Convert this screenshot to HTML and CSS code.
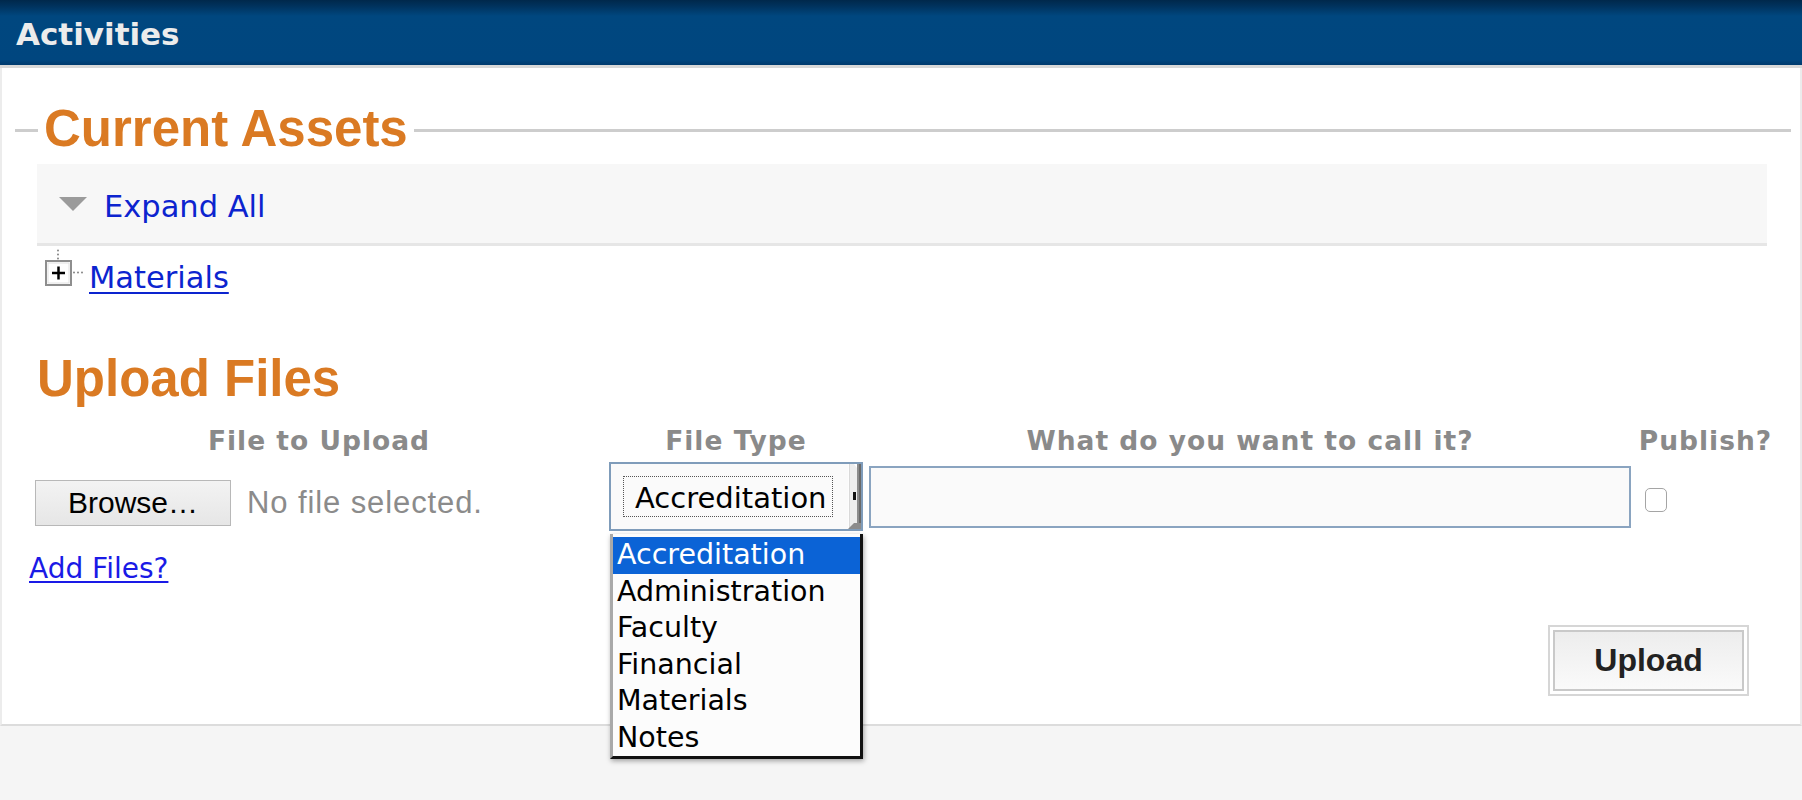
FILE: index.html
```html
<!DOCTYPE html>
<html lang="en">
<head>
<meta charset="utf-8">
<title>Activities</title>
<link rel="stylesheet" href="styles.css">
</head>
<body>
<header class="topbar">
  <h1 class="topbar-title">Activities</h1>
</header>
<main class="panel">
  <section class="assets">
    <div class="legend-row">
      <span class="legend-line legend-line--short"></span>
      <h2 class="section-title section-title--legend">Current Assets</h2>
      <span class="legend-line legend-line--fill"></span>
    </div>
    <div class="expand-bar">
      <svg class="expand-icon" width="28" height="14" viewBox="0 0 28 14"><polygon points="0,0 28,0 14,14" fill="#9b9b9b"/></svg>
      <a class="expand-link" href="#">Expand All</a>
    </div>
    <div class="tree-row">
      <svg class="tree-icon" width="38" height="37" viewBox="0 0 38 37">
        <circle cx="13" cy="1.5" r="0.9" fill="#777"/>
        <circle cx="13" cy="5.5" r="0.9" fill="#777"/>
        <circle cx="13" cy="9.5" r="0.9" fill="#777"/>
        <rect x="1" y="12" width="25" height="24" fill="#fff" stroke="#8e8e8e" stroke-width="2"/>
        <rect x="3" y="14" width="21" height="20" fill="none" stroke="#e2e2e2" stroke-width="1"/>
        <line x1="7" y1="24" x2="20" y2="24" stroke="#000" stroke-width="2.5"/>
        <line x1="13.5" y1="17.5" x2="13.5" y2="30.5" stroke="#000" stroke-width="2.5"/>
        <circle cx="29" cy="23.5" r="0.9" fill="#777"/>
        <circle cx="33" cy="23.5" r="0.9" fill="#777"/>
        <circle cx="37" cy="23.5" r="0.9" fill="#777"/>
      </svg>
      <a class="tree-link" href="#">Materials</a>
    </div>
  </section>

  <section class="upload">
    <h2 class="section-title section-title--plain">Upload Files</h2>
    <div class="upload-grid">
      <div class="col-head">File to Upload</div>
      <div class="col-head">File Type</div>
      <div class="col-head">What do you want to call it?</div>
      <div class="col-head">Publish?</div>

      <div class="file-field">
        <button class="browse-btn" type="button">Browse…</button>
        <span class="file-status">No file selected.</span>
      </div>

      <div class="type-field">
        <div class="select">
          <div class="select-value">Accreditation</div>
          <svg class="select-btn" width="13" height="65" viewBox="0 0 13 65" preserveAspectRatio="none">
            <rect x="0" y="0" width="13" height="65" fill="#ededed"/>
            <rect x="0" y="0" width="1" height="65" fill="#fdfdfd"/>
            <rect x="1" y="0" width="1" height="65" fill="#d9d9d9"/>
            <polygon points="6,0 9,0 9,4" fill="#ffffff"/>
            <rect x="9" y="0" width="4" height="65" fill="#8c8c8c"/>
            <rect x="11" y="0" width="2" height="65" fill="#6a6a6a"/>
            <polygon points="0,65 13,65 13,59 6,59" fill="#8c8c8c"/>
            <rect x="5" y="28" width="3" height="8" fill="#111"/>
          </svg>
        </div>
        <ul class="select-list">
          <li class="select-option select-option--active">Accreditation</li>
          <li class="select-option">Administration</li>
          <li class="select-option">Faculty</li>
          <li class="select-option">Financial</li>
          <li class="select-option">Materials</li>
          <li class="select-option">Notes</li>
        </ul>
      </div>

      <input class="name-input" type="text" aria-label="What do you want to call it?">

      <input class="publish-check" type="checkbox" aria-label="Publish?">
    </div>

    <p class="add-row"><a class="add-files" href="#">Add Files?</a></p>

    <div class="actions">
      <button class="upload-btn" type="button">Upload</button>
    </div>
  </section>
</main>
</body>
</html>
```

FILE: styles.css
```css
html, body {
  margin: 0;
  padding: 0;
}

html {
  min-height: 100%;
}

body {
  min-height: 800px;
  background: #f5f5f5;
  font-family: "DejaVu Sans", Verdana, sans-serif;
  color: #000;
}

/* ---------- Top bar ---------- */
.topbar {
  height: 65px;
  padding: 0 16px;
  background: linear-gradient(#00284b 0px, #003460 7px, #00477f 16px, #00467f 60px, #003c70 64px, #003c70 65px);
  border-bottom: 3px solid #d8d8d8;
}

.topbar-title {
  margin: 0;
  padding-top: 16px;
  font-family: "DejaVu Sans", Verdana, sans-serif;
  font-weight: bold;
  font-size: 31px;
  line-height: 36px;
  color: #ececec;
}

/* ---------- Panel ---------- */
.panel {
  display: block;
  position: relative;
  background: #fff;
  border-left: 2px solid #ececec;
  border-right: 2px solid #ececec;
  border-bottom: 2px solid #dcdcdc;
  padding: 32px 9px 33px 13px;
}

.legend-row {
  display: flex;
  align-items: flex-start;
  height: 58px;
}

.legend-line {
  height: 3px;
  margin-top: 29px;
  background: #cdcdcd;
}

.legend-line--short {
  width: 23px;
  flex: none;
}

.legend-line--fill {
  flex: 1;
}

.section-title {
  margin: 0;
  font-family: "Liberation Sans", Arial, sans-serif;
  font-weight: bold;
  font-size: 51px;
  line-height: 58px;
  color: #da7a23;
}

.section-title--legend {
  padding: 0 6px;
  flex: none;
}

.section-title--plain {
  margin-left: 22px;
}

/* ---------- Expand bar ---------- */
.expand-bar {
  display: flex;
  align-items: center;
  height: 79px;
  margin: 6px 24px 0 22px;
  padding-left: 22px;
  background: #f7f7f7;
  border-bottom: 3px solid #e6e6e6;
}

.expand-icon {
  flex: none;
  display: block;
}

.expand-link {
  margin-left: 17px;
  padding-top: 6px;
  font-size: 30.5px;
  line-height: 36px;
  color: #0c24cf;
  text-decoration: none;
}

/* ---------- Tree ---------- */
.tree-row {
  display: flex;
  align-items: flex-start;
  height: 45px;
  margin: 3px 0 0 30px;
}

.tree-icon {
  flex: none;
  display: block;
}

.tree-link {
  margin: 11px 0 0 6px;
  font-size: 30.5px;
  line-height: 35.5px;
  color: #0c24cf;
  text-decoration: underline;
  text-decoration-thickness: 2px;
  text-underline-offset: 4px;
}

/* ---------- Upload ---------- */
.upload {
  margin-top: 56px;
}

.upload-grid {
  display: grid;
  grid-template-columns: 568px 254px 762px 137px;
  column-gap: 6px;
  row-gap: 3px;
  align-items: start;
  margin: 17px 0 0 20px;
}

.col-head {
  text-align: center;
  font-family: "DejaVu Sans", Verdana, sans-serif;
  font-weight: bold;
  font-size: 26.5px;
  line-height: 32px;
  letter-spacing: 1px;
  color: #8a8a8a;
  white-space: nowrap;
}

.file-field {
  display: flex;
  align-items: center;
  margin-top: 20px;
}

.browse-btn {
  flex: none;
  width: 196px;
  height: 46px;
  padding: 0;
  border: 1.5px solid #b8b8b8;
  border-radius: 0;
  background: linear-gradient(#f3f3f3, #e6e6e6);
  font-family: "Liberation Sans", Arial, sans-serif;
  font-size: 30px;
  color: #000;
}

.file-status {
  margin-left: 16px;
  font-family: "Liberation Sans", Arial, sans-serif;
  font-size: 31px;
  letter-spacing: 0.9px;
  color: #8b8b8b;
  white-space: nowrap;
}

.type-field {
  position: relative;
  z-index: 10;
  margin-top: 2px;
}

.select {
  display: flex;
  align-items: flex-start;
  height: 69px;
  box-sizing: border-box;
  border: 2px solid #7f9cba;
  background: #fafafa;
}

.select-value {
  width: 210px;
  height: 41px;
  box-sizing: border-box;
  margin: 12px 0 0 12px;
  padding: 3px 0 0 11px;
  border: 1px dotted #555;
  font-size: 29px;
  line-height: 36px;
  color: #000;
  white-space: nowrap;
  overflow: hidden;
}

.select-btn {
  display: block;
  margin-left: auto;
  align-self: stretch;
  width: 13px;
  height: auto;
}

.select-list {
  position: absolute;
  left: 1px;
  top: calc(100% + 3px);
  z-index: 20;
  width: 253px;
  box-sizing: border-box;
  margin: 0;
  padding: 3px 0 0;
  list-style: none;
  background: #fcfcfc;
  border-left: 3px solid #a9a9a9;
  border-right: 3px solid #111;
  border-bottom: 3px solid #111;
  box-shadow: 1px 2px 5px rgba(0, 0, 0, 0.35);
}

.select-option {
  padding-left: 4px;
  font-size: 28.5px;
  line-height: 36.5px;
  color: #000;
  white-space: nowrap;
}

.select-option--active {
  background: #0b63d6;
  color: #fff;
}

.name-input {
  display: block;
  width: 100%;
  height: 62px;
  box-sizing: border-box;
  margin: 6px 0 0;
  border: 2px solid #8aa4c0;
  border-radius: 0;
  background: #fafafa;
}

.publish-check {
  appearance: none;
  -webkit-appearance: none;
  justify-self: start;
  width: 22px;
  height: 24px;
  box-sizing: border-box;
  margin: 28px 0 0 8px;
  border: 1.5px solid #a5a5a5;
  border-radius: 5px;
  background: #fff;
}

.add-row {
  margin: 21px 0 0 14px;
  font-size: 28px;
  line-height: 33px;
}

.add-files {
  color: #1a1ae6;
  text-decoration: underline;
  text-decoration-thickness: 2px;
  text-underline-offset: 3px;
}

.actions {
  display: flex;
  justify-content: flex-end;
  margin: 45px 47px 0 0;
}

.upload-btn {
  width: 191px;
  height: 61px;
  padding: 0;
  border: 2px solid #c9c9c9;
  border-radius: 0;
  background: linear-gradient(#ededed, #fafafa);
  box-shadow: 0 0 0 3px #fff, 0 0 0 5px #d6d6d6;
  font-family: "Liberation Sans", Arial, sans-serif;
  font-weight: bold;
  font-size: 32px;
  color: #222;
}
```
